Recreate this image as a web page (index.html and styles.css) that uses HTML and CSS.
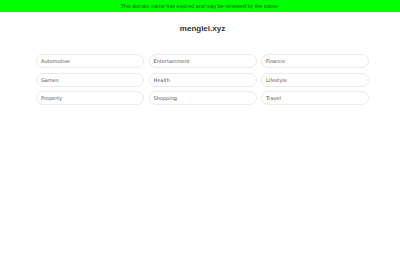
FILE: index.html
```html
<!DOCTYPE html>
<html lang="en">
<head>
    <meta charset="UTF-8">
    <meta name="viewport" content="width=device-width, initial-scale=1.0">
    <title>menglei.xyz</title>
    <link rel="stylesheet" href="styles.css">
</head>
<body>
    <div class="notice">This domain name has expired and may be renewed by the owner.</div>

    <div class="page">
        <h1 class="domain">menglei.xyz</h1>

        <div class="links">
            <a class="link" href="#">Automotive</a>
            <a class="link" href="#">Entertainment</a>
            <a class="link" href="#">Finance</a>
            <a class="link" href="#">Games</a>
            <a class="link" href="#">Health</a>
            <a class="link" href="#">Lifestyle</a>
            <a class="link" href="#">Property</a>
            <a class="link" href="#">Shopping</a>
            <a class="link" href="#">Travel</a>
        </div>
    </div>
</body>
</html>
```

FILE: styles.css
```css
* {
    margin: 0;
    padding: 0;
    box-sizing: border-box;
}

body {
    background: #fff;
    font-family: "DejaVu Sans", Verdana, sans-serif;
}

.notice {
    background: #00ff00;
    color: #2a5a2a;
    font-family: "Liberation Sans", Arial, sans-serif;
    font-size: 5.4px;
    height: 12px;
    line-height: 12px;
    text-align: center;
}

.page {
    padding: 10px 31px 0 36px;
}

.domain {
    color: #333;
    font-family: "Liberation Sans", Arial, sans-serif;
    font-size: 8px;
    font-weight: bold;
    text-align: center;
    line-height: 13px;
    margin-bottom: 19px;
}

.links {
    display: grid;
    grid-template-columns: repeat(3, 1fr);
    column-gap: 4.5px;
    row-gap: 4.5px;
}

.link {
    display: block;
    height: 14px;
    line-height: 12px;
    padding-left: 4px;
    border: 1px solid #eaeaea;
    border-radius: 7px;
    color: #555;
    font-size: 5px;
    text-decoration: none;
}
```
